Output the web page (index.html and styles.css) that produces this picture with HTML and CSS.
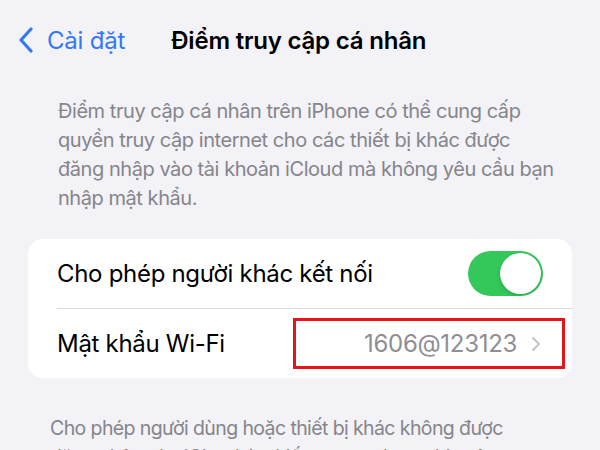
FILE: index.html
```html
<!DOCTYPE html>
<html lang="vi">
<head>
  <meta charset="UTF-8">
  <meta name="viewport" content="width=device-width, initial-scale=1.0">
  <title>Điểm truy cập cá nhân</title>
  <link rel="stylesheet" href="styles.css">
</head>
<body>

  <header class="nav-bar">
    <a class="back-link" href="#">
      <svg class="back-icon" width="16" height="26" viewBox="0 0 16 26">
        <path d="M13 2 L3 13 L13 24" fill="none" stroke="currentColor" stroke-width="3.2" stroke-linecap="round" stroke-linejoin="round"/>
      </svg>
      <span>Cài đặt</span>
    </a>
    <h1 class="nav-title">Điểm truy cập cá nhân</h1>
  </header>

  <p class="section-note">
    Điểm truy cập cá nhân trên iPhone có thể cung cấp quyền truy cập internet cho các thiết bị khác được<br>
    đăng nhập vào tài khoản iCloud mà không yêu cầu bạn nhập mật khẩu.
  </p>

  <div class="settings-group">
    <div class="settings-row">
      <span class="row-label">Cho phép người khác kết nối</span>
      <span class="toggle is-on"><span class="toggle-knob"></span></span>
    </div>
    <div class="settings-row">
      <span class="row-label">Mật khẩu Wi-Fi</span>
      <span class="row-value">
        1606@123123
        <svg class="chevron" width="10" height="16" viewBox="0 0 10 16">
          <path d="M2 2 L8 8 L2 14" fill="none" stroke="currentColor" stroke-width="2" stroke-linecap="round" stroke-linejoin="round"/>
        </svg>
      </span>
      <!-- highlight frame around the password -->
      <span class="highlight-box"></span>
    </div>
  </div>

  <p class="section-footer">
    Cho phép người dùng hoặc thiết bị khác không được đăng nhập vào iCloud tìm kiếm mạng được chia sẻ “iPhone” khi bạn ở trong cài đặt Điểm truy cập cá nhân.
  </p>

</body>
</html>
```

FILE: styles.css
```css
/* Page */
body {
  margin: 0;
  background: #f2f2f7;
  font-family: Inter, "Noto Sans", sans-serif;
  color: #000;
  overflow: hidden;
}

/* Navigation bar */
.nav-bar {
  display: flex;
  align-items: center;
  height: 80px;
  padding-left: 18px;
}

.back-link {
  display: flex;
  align-items: center;
  gap: 13px;
  color: #3478f6;
  text-decoration: none;
  font-size: 24px;
  letter-spacing: -0.2px;
}

.back-icon {
  display: block;
}

.nav-title {
  margin: 0 0 0 46px;
  font-size: 24px;
  font-weight: 600;
  letter-spacing: -0.2px;
}

/* Explanation text above the group */
.section-note {
  margin: 17px 28px 0 58px;
  font-size: 20px;
  line-height: 29px;
  letter-spacing: -0.45px;
  color: #85858a;
}

/* White grouped list */
.settings-group {
  margin: 26px 28px 0 28px;
  background: #fff;
  border-radius: 15px;
  padding-left: 29px;
}

.settings-row {
  position: relative;
  display: flex;
  align-items: center;
  justify-content: space-between;
  height: 69px;
  padding-right: 29px;
  font-size: 24px;
  letter-spacing: -0.3px;
}

.settings-row + .settings-row {
  border-top: 1px solid #d9d9de;
  height: 69px;
}

.row-value {
  display: flex;
  align-items: center;
  gap: 14px;
  padding-right: 2px;
  color: #8e8e93;
}

.chevron {
  color: #c4c4c8;
}

/* Switch */
.toggle {
  position: relative;
  width: 75px;
  height: 45px;
  border-radius: 23px;
  background: #e5e5ea;
}

.toggle.is-on {
  background: #34c759;
}

.toggle-knob {
  position: absolute;
  top: 2px;
  right: 2px;
  width: 41px;
  height: 41px;
  border-radius: 50%;
  background: #fff;
  box-shadow: 0 2px 4px rgba(0, 0, 0, 0.15);
}

.highlight-box {
  position: absolute;
  left: 236px;
  top: 9px;
  width: 266px;
  height: 45px;
  border: 3px solid #e3151b;
}

/* Text under the group */
.section-footer {
  margin: 36px 70px 0 50px;
  font-size: 19.5px;
  line-height: 29px;
  letter-spacing: -0.6px;
  color: #85858a;
}
```
